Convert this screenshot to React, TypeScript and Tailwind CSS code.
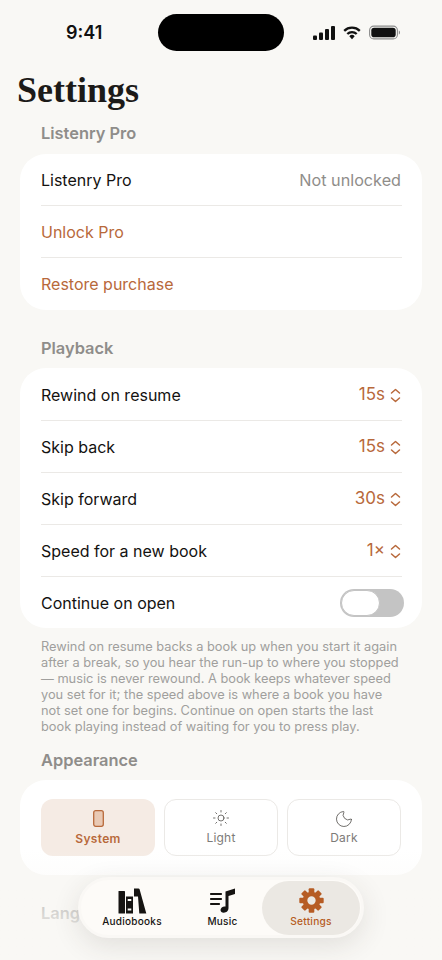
import { Sun, Moon } from "lucide-react";

const font = { fontFamily: "Inter, 'Noto Sans', sans-serif" };

function Updown() {
  return (
    <svg width="11" height="15" viewBox="0 0 11 15" fill="none" stroke="#b8693b" strokeWidth="1.5" strokeLinecap="round" strokeLinejoin="round">
      <path d="M1.5 5 5.500 1.500 9.500 5" />
      <path d="M1.5 10 5.500 13.500 9.500 10" />
    </svg>
  );
}

function Row({ label, value }: { label: string; value: string }) {
  return (
    <div className="flex h-[52px] items-center justify-between border-b border-[#ebe9e6] pt-[1px]">
      <span className="text-[16px] text-[#141210]">{label}</span>
      <span className="mr-[1px] flex items-center gap-[5px] text-[17px] text-[#b8693b]">
        {value}
        <Updown />
      </span>
    </div>
  );
}

function SectionLabel({ children }: { children: string }) {
  return <h2 className="px-[41px] text-[16.4px] leading-[22px] font-semibold text-[#8f8d8a]">{children}</h2>;
}

function StatusBar() {
  return (
    <div className="flex h-[65px] items-start">
      <span className="mt-[22px] ml-[66px] w-[92px] text-[18px] leading-[22px] font-semibold text-[#111]">9:41</span>
      <div className="mt-[14px] h-[37px] w-[126px] rounded-full bg-black" />
      <div className="mt-[25px] ml-[29px] flex items-center gap-[8px]">
        <svg width="22" height="14" viewBox="0 0 22 14" fill="#111">
          <rect x="0" y="9.500" width="4" height="4.500" rx="1" />
          <rect x="6" y="6.500" width="4" height="7.500" rx="1" />
          <rect x="12" y="3" width="4" height="11" rx="1" />
          <rect x="18" y="0" width="4" height="14" rx="1" />
        </svg>
        <svg width="18" height="14" viewBox="0 0 18 14" fill="none" stroke="#111" strokeWidth="2.300">
          <path d="M1.200 4.800A11.200 11.200 0 0 1 16.800 4.800" />
          <path d="M4.300 8A6.700 6.700 0 0 1 13.700 8" />
          <path d="M6.300 10.200 9 13.300 11.700 10.200A3.800 3.800 0 0 0 6.300 10.200z" fill="#111" stroke="none" />
        </svg>
        <svg width="31" height="15" viewBox="0 0 31 15" fill="none">
          <rect x="0.600" y="1.100" width="27.800" height="12.800" rx="4.200" stroke="#8c8c8c" strokeWidth="1.100" />
          <rect x="2.300" y="2.800" width="24.400" height="9.400" rx="2.800" fill="#111" />
          <path d="M29.800 5.500c.8.300 1.200 1.100 1.200 2s-.4 1.700-1.200 2z" fill="#8c8c8c" />
        </svg>
      </div>
    </div>
  );
}

function BooksIcon() {
  return (
    <svg width="29" height="26" viewBox="0 0 29 26" fill="#161412">
      <rect x="0.500" y="3" width="6.500" height="22.500" rx="0.600" />
      <path fillRule="evenodd" d="M8 8.500h7v17H8zM9.700 11v2h3.600v-2zM9.700 20.500v2h3.600v-2z" />
      <path d="M16 0.500h4.500l1 0.500 6.800 24.500h-7L20 8.500h-4z" />
    </svg>
  );
}

function MusicIcon() {
  return (
    <svg width="26" height="25" viewBox="0 0 26 25" fill="#161412">
      <rect x="0" y="5" width="12" height="2" rx="0.800" />
      <rect x="0" y="10" width="12" height="2" rx="0.800" />
      <rect x="0" y="15" width="10" height="2" rx="0.800" />
      <path d="M15.500 3.500 25 .5v5.500l-6.500 2V20c0 2.800-2.200 4.700-4.700 4.700-2.100 0-3.300-1.200-3.300-2.700 0-2 2-3.600 4-3.600.4 0 .7 0 1 .1z" />
    </svg>
  );
}

function GearIcon() {
  const teeth = [0, 45, 90, 135, 180, 225, 270, 315];
  return (
    <svg width="25" height="25" viewBox="0 0 24 24" fill="#b65c24">
      {teeth.map((a) => (
        <rect key={a} x="9.300" y="0.300" width="5.400" height="6" rx="1" transform={`rotate(${a} 12 12)`} />
      ))}
      <path d="M12 3.500a8.500 8.500 0 1 0 0 17 8.500 8.500 0 0 0 0-17zm0 4.500a4 4 0 1 1 0 8 4 4 0 0 1 0-8z" fillRule="evenodd" />
    </svg>
  );
}

function TabBar() {
  return (
    <div className="absolute top-[877px] left-[78px] flex h-[61px] w-[286px] items-center rounded-full border-[3px] border-[#faf8f5] bg-[#fdfbf8] shadow-[0_8px_28px_rgba(60,50,40,0.12)]">
      <div className="flex w-[102px] flex-col items-center">
        <BooksIcon />
        <span className="text-[10px] leading-[14px] font-medium tracking-[0.25px] text-[#161412]">Audiobooks</span>
      </div>
      <div className="flex w-[79px] flex-col items-center">
        <MusicIcon />
        <span className="mt-[1px] text-[10px] leading-[14px] font-medium tracking-[0.25px] text-[#161412]">Music</span>
      </div>
      <div className="flex h-[54px] w-[98px] flex-col items-center justify-center rounded-full bg-[#ebe8e3]">
        <GearIcon />
        <span className="mt-[1px] text-[10.2px] leading-[14px] font-medium tracking-[0.25px] text-[#b65c24]">Settings</span>
      </div>
    </div>
  );
}

export default function App() {
  return (
    <div className="relative h-[960px] w-[442px] overflow-hidden bg-[#f9f8f5]" style={font}>
      <StatusBar />
      <h1 className="pl-[17px] text-[36px] leading-[50px] font-bold text-[#1c1a18]" style={{ fontFamily: "'Liberation Serif', serif" }}>
        Settings
      </h1>
      <div className="mt-[7px]">
        <SectionLabel>Listenry Pro</SectionLabel>
      </div>
      <div className="mx-[20px] mt-[10px] rounded-[26px] bg-white pr-[20px] pl-[21px]">
        <div className="flex h-[52px] items-center justify-between border-b border-[#ebe9e6] pt-[1px]">
          <span className="text-[16px] text-[#141210]">Listenry Pro</span>
          <span className="mr-[1px] text-[16.2px] text-[#8f8d8a]">Not unlocked</span>
        </div>
        <div className="flex h-[52px] items-center border-b border-[#ebe9e6] pt-[1px] text-[16px] text-[#b8693b]">Unlock Pro</div>
        <div className="flex h-[52px] items-center text-[16px] text-[#b8693b]">Restore purchase</div>
      </div>

      <div className="mt-[27px]">
        <SectionLabel>Playback</SectionLabel>
      </div>
      <div className="mx-[20px] mt-[9px] rounded-[26px] bg-white pt-[1px] pr-[20px] pl-[21px]">
        <Row label="Rewind on resume" value="15s" />
        <Row label="Skip back" value="15s" />
        <Row label="Skip forward" value="30s" />
        <Row label="Speed for a new book" value="1×" />
        <div className="flex h-[51px] items-center justify-between">
          <span className="text-[16px] text-[#141210]">Continue on open</span>
          <div className="-mr-[2px] h-[28px] w-[64px] rounded-full bg-[#c4c4c4] p-[1px]">
            <div className="h-[26px] w-[39px] rounded-full border border-[#c4c4c4] bg-white" />
          </div>
        </div>
      </div>
      <p className="mt-[11px] pr-[40px] pl-[41px] text-[12.8px] leading-[16px] text-[#a09f9d]">
        Rewind on resume backs a book up when you start it again after a break, so you hear the run-up to where you stopped — music is never rewound. A book keeps whatever speed you set for it; the speed above is where a book you have not set one for begins. Continue on open starts the last book playing instead of waiting for you to press play.
      </p>

      <div className="mt-[14px]">
        <SectionLabel>Appearance</SectionLabel>
      </div>
      <div className="mx-[20px] mt-[9px] grid grid-cols-3 gap-[9px] rounded-[26px] bg-white px-[21px] pt-[19px] pb-[19px]">
        <div className="flex h-[57px] flex-col items-center justify-center gap-[3px] rounded-[12px] bg-[#f5ebe4] pt-[2px] text-[12px] font-semibold tracking-[0.3px] text-[#b8693b]">
          <svg width="11" height="17" viewBox="0 0 11 17" fill="#e9c9b4" stroke="#b8693b" strokeWidth="1.300">
            <rect x="0.700" y="0.700" width="9.600" height="15.600" rx="2" />
          </svg>
          System
        </div>
        <div className="flex h-[57px] flex-col items-center justify-center gap-[2px] rounded-[12px] border border-[#ebe9e6] pt-[1px] text-[12px] tracking-[0.2px] text-[#7d7b78]">
          <Sun size={18} strokeWidth={1.1} color="#55534f" />
          Light
        </div>
        <div className="flex h-[57px] flex-col items-center justify-center rounded-[12px] border border-[#ebe9e6] pt-[1px] text-[12px] tracking-[0.2px] text-[#7d7b78]">
          <Moon size={20} strokeWidth={1} color="#55534f" />
          Dark
        </div>
      </div>
      <div className="mt-[27px]">
        <SectionLabel>Language</SectionLabel>
      </div>

      <div className="absolute inset-x-0 bottom-0 h-[110px] bg-gradient-to-b from-[#f9f8f5]/0 via-[#f9f8f5]/70 via-60% to-[#f9f8f5]" />
      <TabBar />
    </div>
  );
}
